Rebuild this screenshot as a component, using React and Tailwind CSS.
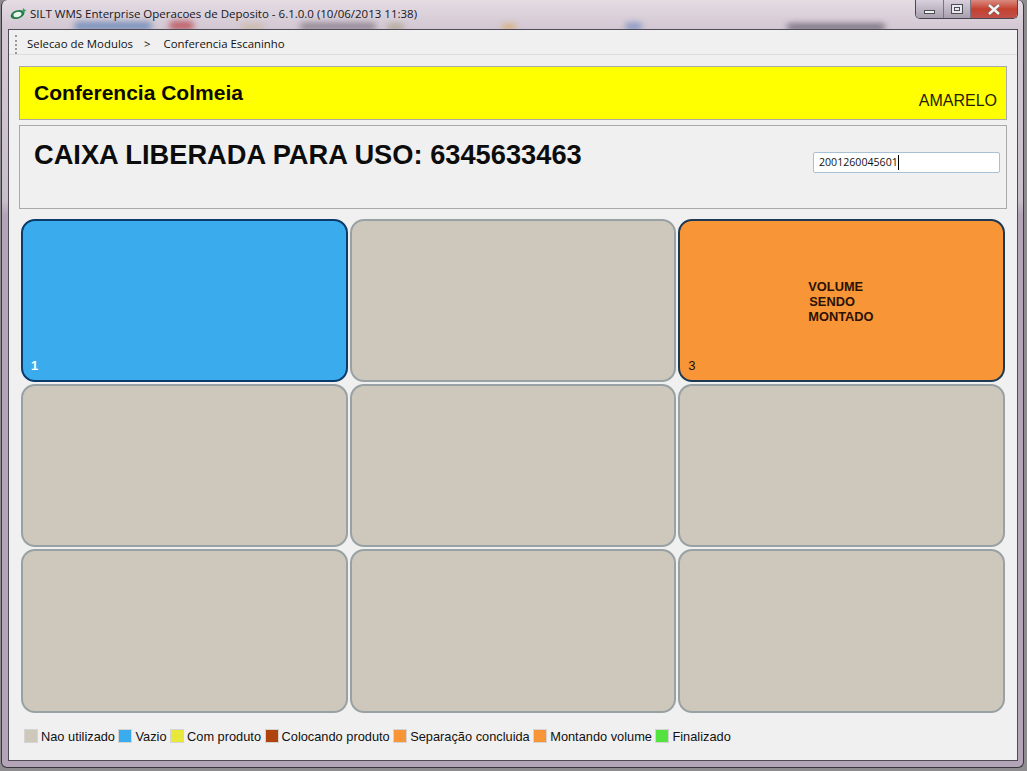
const CELLS = [
  { id: 1, kind: "blue", label: "1" },
  { id: 2 },
  { id: 3, kind: "orange", label: "3" },
  { id: 4 },
  { id: 5 },
  { id: 6 },
  { id: 7 },
  { id: 8 },
  { id: 9 },
];

const LEGEND = [
  { color: "bg-[#cec7bb]", text: "Nao utilizado" },
  { color: "bg-[#3aabec]", text: "Vazio" },
  { color: "bg-[#e8e83a]", text: "Com produto" },
  { color: "bg-[#b0440f]", text: "Colocando produto" },
  { color: "bg-[#f89536]", text: "Separação concluida" },
  { color: "bg-[#f89536]", text: "Montando volume" },
  { color: "bg-[#52e33f]", text: "Finalizado" },
];

function AppIcon() {
  return (
    <svg width="18" height="14" viewBox="0 0 18 14" className="shrink-0">
      <ellipse cx="8.5" cy="7.5" rx="7" ry="4.2" transform="rotate(-18 8.5 7.5)" fill="#1f7a45" />
      <ellipse cx="8.5" cy="7.5" rx="4.2" ry="2.5" transform="rotate(-18 8.5 7.5)" fill="#e9f4ec" />
      <path d="M14 0.5 L15 2.5 L17.5 3 L15.5 4.5 L15.5 6.5 L13.5 5 Z" fill="#2d9a5a" />
    </svg>
  );
}

function WindowButtons() {
  return (
    <div className="flex h-[19px] w-[103px] overflow-hidden rounded-b-[5px] border border-t-0 border-[#4c4654]">
      <div className="flex w-[28px] items-center justify-center border-r border-[#7b7382] bg-gradient-to-b from-[#d8d0dc] to-[#a99fae]">
        <div className="mt-[5px] h-[4px] w-[11px] border border-[#4d4d55] bg-[#f2f2f2]" />
      </div>
      <div className="flex w-[27px] items-center justify-center border-r border-[#7b7382] bg-gradient-to-b from-[#d8d0dc] to-[#a99fae]">
        <div className="flex h-[10px] w-[12px] items-center justify-center border border-[#4d4d55] bg-[#e8e8ee]">
          <div className="h-[4px] w-[6px] border border-[#4d4d55]" />
        </div>
      </div>
      <div className="flex flex-1 items-center justify-center bg-gradient-to-b from-[#d98a80] via-[#c4402f] to-[#c0504a]">
        <svg width="14" height="11" viewBox="0 0 14 11">
          <path d="M2 1 L12 10 M12 1 L2 10" stroke="#6e5a58" strokeWidth="3.6" />
          <path d="M2 1 L12 10 M12 1 L2 10" stroke="#f4f4f4" strokeWidth="2.4" />
        </svg>
      </div>
    </div>
  );
}

function Cell({ kind, label }) {
  if (kind === "blue") {
    return (
      <div className="relative rounded-[14px] border-2 border-[#0b3a6b] bg-[#3aabec]">
        <span className="absolute bottom-[7px] left-[8px] text-[13px] font-bold leading-[15px] text-white">{label}</span>
      </div>
    );
  }
  if (kind === "orange") {
    return (
      <div className="relative rounded-[14px] border-2 border-[#1d3a55] bg-[#f89536]">
        <div className="absolute left-[128px] top-[58px] text-[12.8px] font-bold leading-[15px] text-[#2a1204]">
          <div>VOLUME</div>
          <div className="pl-px">SENDO</div>
          <div>MONTADO</div>
        </div>
        <span className="absolute bottom-[7px] left-[8px] text-[13px] leading-[15px] text-[#1c1008]">{label}</span>
      </div>
    );
  }
  return <div className="rounded-[14px] border-2 border-[#98a1a3] bg-[#cec7bb]" />;
}

export default function App() {
  return (
    <div className="h-[771px] w-[1027px] overflow-hidden bg-[#8f8c90] font-['Liberation_Sans',sans-serif]">
      <div className="relative ml-px flex h-[768px] w-[1023px] flex-col overflow-hidden rounded-[6px] border border-t-0 border-[#3a3640] bg-[linear-gradient(to_bottom,#e4dbe3_0px,#d3c8d3_28px,#c9bfcb_200px,#b3a4b8_215px,#b3a4b8_100%)]">
        {/* glass blur behind the title bar */}
        <div className="absolute left-[72px] top-[22px] h-[8px] w-[78px] rounded-full bg-[#5b7fb5] opacity-80 blur-[3px]" />
        <div className="absolute left-[167px] top-[21px] h-[9px] w-[25px] rounded-full bg-[#b8434c] opacity-80 blur-[3px]" />
        <div className="absolute left-[239px] top-[24px] h-[6px] w-[23px] rounded-full bg-[#c9b59b] opacity-80 blur-[3px]" />
        <div className="absolute left-[298px] top-[23px] h-[7px] w-[76px] rounded-full bg-[#7a6f7c] opacity-80 blur-[3px]" />
        <div className="absolute left-[385px] top-[24px] h-[6px] w-[17px] rounded-full bg-[#a89a7c] opacity-80 blur-[3px]" />
        <div className="absolute left-[500px] top-[24px] h-[6px] w-[14px] rounded-full bg-[#d9a85c] opacity-80 blur-[3px]" />
        <div className="absolute left-[623px] top-[23px] h-[7px] w-[17px] rounded-full bg-[#6f86bd] opacity-80 blur-[3px]" />
        <div className="absolute left-[785px] top-[24px] h-[6px] w-[98px] rounded-full bg-[#4f4a58] opacity-80 blur-[3px]" />

        <div className="relative flex h-[29px] shrink-0 items-start justify-between pl-[7px] pr-[5px]">
          <div className="flex items-center gap-[3px] pt-[5px] font-['Open_Sans',sans-serif] text-[11.5px] leading-[18px] text-[#16161c]">
            <AppIcon />
            <span>SILT WMS Enterprise Operacoes de Deposito - 6.1.0.0 (10/06/2013 11:38)</span>
          </div>
          <WindowButtons />
        </div>

        <div className="relative mb-[6px] ml-[6px] mr-[5px] flex flex-1 flex-col border border-[#4e4a55] bg-[#f0f0f0]">
          <div className="flex h-[25px] shrink-0 items-center border-b border-[#dcdcdc] pl-[6px] pt-[4px] font-['Open_Sans',sans-serif] text-[11.4px] text-[#111]">
            <div className="mr-[10px] h-[19px] w-[2px] border-l-2 border-dotted border-[#9a9a9a]" />
            <span>Selecao de Modulos</span>
            <span className="ml-[11px]">&gt;</span>
            <span className="ml-[13px]">Conferencia Escaninho</span>
          </div>

          <div className="flex flex-1 flex-col pl-[10px] pr-[10px] pt-[11px]">
            <div className="flex h-[54px] shrink-0 items-start justify-between border border-[#a9a9a9] bg-[#ffff00] pl-[14px] pr-[9px]">
              <span className="mt-[13px] text-[21px] font-bold leading-[26px] text-[#0b0b00]">Conferencia Colmeia</span>
              <span className="mt-[24px] text-[16px] leading-[20px] text-[#22220a]">AMARELO</span>
            </div>

            <div className="mt-[5px] flex h-[84px] shrink-0 items-start justify-between border border-[#a9a9a9] bg-[#f0f0f0] pl-[14px] pr-[6px]">
              <span className="mt-[13px] text-[27.25px] font-bold leading-[32px] text-[#0c0c0c]">CAIXA LIBERADA PARA USO: 6345633463</span>
              <div className="mt-[26px] flex h-[21px] w-[187px] items-center rounded-[2px] border border-[#a8c0d4] bg-white pl-[5px] font-['Open_Sans',sans-serif] text-[10.6px] text-[#111]">
                2001260045601
                <span className="h-[15px] w-px bg-black" />
              </div>
            </div>

            <div className="mx-[2px] mt-[10px] grid h-[494px] shrink-0 grid-cols-3 grid-rows-[163px_163px_164px] gap-[2px]">
              {CELLS.map((c) => (
                <Cell key={c.id} kind={c.kind} label={c.label} />
              ))}
            </div>

            <div className="ml-[5px] mt-[16px] flex items-center gap-[3.5px] text-[12.8px] leading-[14px] text-[#111]">
              {LEGEND.map((item) => (
                <div key={item.text} className="flex items-center gap-[3px]">
                  <span className={`h-[14px] w-[14px] border border-[#d4d4d4] ${item.color}`} />
                  <span className="relative top-px">{item.text}</span>
                </div>
              ))}
            </div>
          </div>
        </div>
      </div>
    </div>
  );
}
